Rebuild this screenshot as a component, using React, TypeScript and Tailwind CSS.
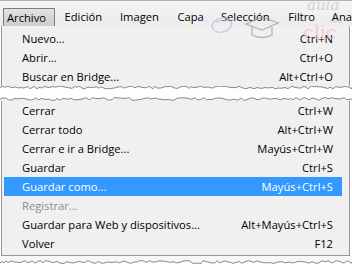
import React from 'react';

type Item = { label: string; shortcut?: string; active?: boolean; disabled?: boolean };

const top: Item[] = [
  { label: 'Nuevo...', shortcut: 'Ctrl+N' },
  { label: 'Abrir...', shortcut: 'Ctrl+O' },
  { label: 'Buscar en Bridge...', shortcut: 'Alt+Ctrl+O' },
];

const bottom: Item[] = [
  { label: 'Cerrar', shortcut: 'Ctrl+W' },
  { label: 'Cerrar todo', shortcut: 'Alt+Ctrl+W' },
  { label: 'Cerrar e ir a Bridge...', shortcut: 'Mayús+Ctrl+W' },
  { label: 'Guardar', shortcut: 'Ctrl+S' },
  { label: 'Guardar como...', shortcut: 'Mayús+Ctrl+S', active: true },
  { label: 'Registrar...', disabled: true },
  { label: 'Guardar para Web y dispositivos...', shortcut: 'Alt+Mayús+Ctrl+S' },
  { label: 'Volver', shortcut: 'F12' },
];

// jagged line for the torn paper edges
function tear(seed: number, base: number, amp: number) {
  let s = seed;
  const rnd = () => {
    s = (s * 9301 + 49297) % 233280;
    return s / 233280;
  };
  const pts: string[] = [];
  for (let x = 0; x <= 352; x += 2 + Math.floor(rnd() * 3)) {
    pts.push(`${x},${(base + (rnd() - 0.5) * amp).toFixed(1)}`);
  }
  pts.push(`352,${base}`);
  return pts;
}

const Tear: React.FC<{ seed: number; h: number; base: number; fill: 'above' | 'below'; color: string }> = ({ seed, h, base, fill, color }) => {
  const pts = tear(seed, base, 3);
  const line = 'M' + pts.join(' L');
  const area = fill === 'above' ? `M0,0 L${pts.join(' L')} L352,0 Z` : `M0,${h} L${pts.join(' L')} L352,${h} Z`;
  return (
    <svg width="352" height={h} className="block">
      <path d={area} fill={color} />
      <path d={line} fill="none" stroke="#8a8a8a" strokeWidth="1" />
    </svg>
  );
};

const Row: React.FC<{ item: Item }> = ({ item }) => (
  <div
    className={`flex h-[19px] items-center justify-between pl-[18px] pr-[9px] ${
      item.active ? 'bg-[#3399ff] text-white' : item.disabled ? 'text-[#8d8d8d]' : 'text-black'
    }`}
  >
    <span>{item.label}</span>
    {item.shortcut && <span>{item.shortcut}</span>}
  </div>
);

export default function App() {
  return (
    <div className="relative h-[266px] w-[352px] overflow-hidden bg-white text-[11.2px] leading-none" style={{ fontFamily: '"Open Sans", "Noto Sans", sans-serif' }}>
      {/* menu bar */}
      <div className="flex h-[26px] items-end border-t border-[#b0b0b0] bg-gradient-to-b from-[#f4f4f4] to-[#ececec] text-black">
        <div className="ml-[3px] flex h-[18px] w-[52px] items-center border border-b-0 border-[#7d7d7d] bg-gradient-to-b from-[#e2e2e2] to-[#cdcdcd] pl-[3px]">
          Archivo
        </div>
        <div className="ml-[10px] flex h-[18px] w-[56px] items-center">Edición</div>
        <div className="flex h-[18px] w-[58px] items-center">Imagen</div>
        <div className="flex h-[18px] w-[44px] items-center">Capa</div>
        <div className="flex h-[18px] w-[68px] items-center">Selección</div>
        <div className="flex h-[18px] w-[44px] items-center">Filtro</div>
        <div className="flex h-[18px] items-center">Ana</div>
      </div>

      {/* first part of the menu */}
      <div className="ml-[1px] w-[349px] border-x border-[#979797] bg-[#f0f0f0] pl-[2px] pr-[7px] pt-[3px]">
        {top.map((it) => (
          <Row key={it.label} item={it} />
        ))}
      </div>
      <Tear seed={7} h={4} base={1.5} fill="above" color="#f0f0f0" />
      <div className="h-[7px]" />
      <Tear seed={31} h={4} base={2} fill="below" color="#f0f0f0" />

      {/* second part */}
      <div className="ml-[1px] w-[349px] border-x border-b border-[#979797] bg-[#f0f0f0] pb-[2px] pl-[2px] pr-[7px]">
        {bottom.map((it) => (
          <Row key={it.label} item={it} />
        ))}
      </div>
      <Tear seed={113} h={10} base={6} fill="above" color="#f7f7f7" />

      {/* aulaclic watermark */}
      <div className="pointer-events-none absolute left-[208px] top-0 h-[44px] w-[140px] opacity-75">
        <svg width="80" height="44" className="absolute left-0 top-0">
          <ellipse cx="14" cy="25" rx="10" ry="7" fill="none" stroke="#b7b7e0" strokeWidth="1.2" transform="rotate(-15 14 25)" />
          <path d="M8 22 Q14 19 20 21" fill="none" stroke="#b7b7e0" strokeWidth="1" />
          <path d="M38 24 L54 17 L70 23 L54 30 Z" fill="none" stroke="#a0a0a0" strokeWidth="1.3" />
          <path d="M44 27 L44 35 Q54 40 64 35 L64 27" fill="none" stroke="#a0a0a0" strokeWidth="1.3" />
        </svg>
        <span className="absolute left-[99px] top-[-2px] text-[15px] italic text-[#c8c8c8]" style={{ fontFamily: '"DejaVu Serif", serif' }}>aula</span>
        <span className="absolute left-[120px] top-[18px] text-[6px] text-[#c4c4c4]">.com</span>
        <span className="absolute left-[95px] top-[23px] text-[19px] text-[#f1c4c4]" style={{ fontFamily: '"DejaVu Serif", serif' }}>clic</span>
      </div>
    </div>
  );
}
